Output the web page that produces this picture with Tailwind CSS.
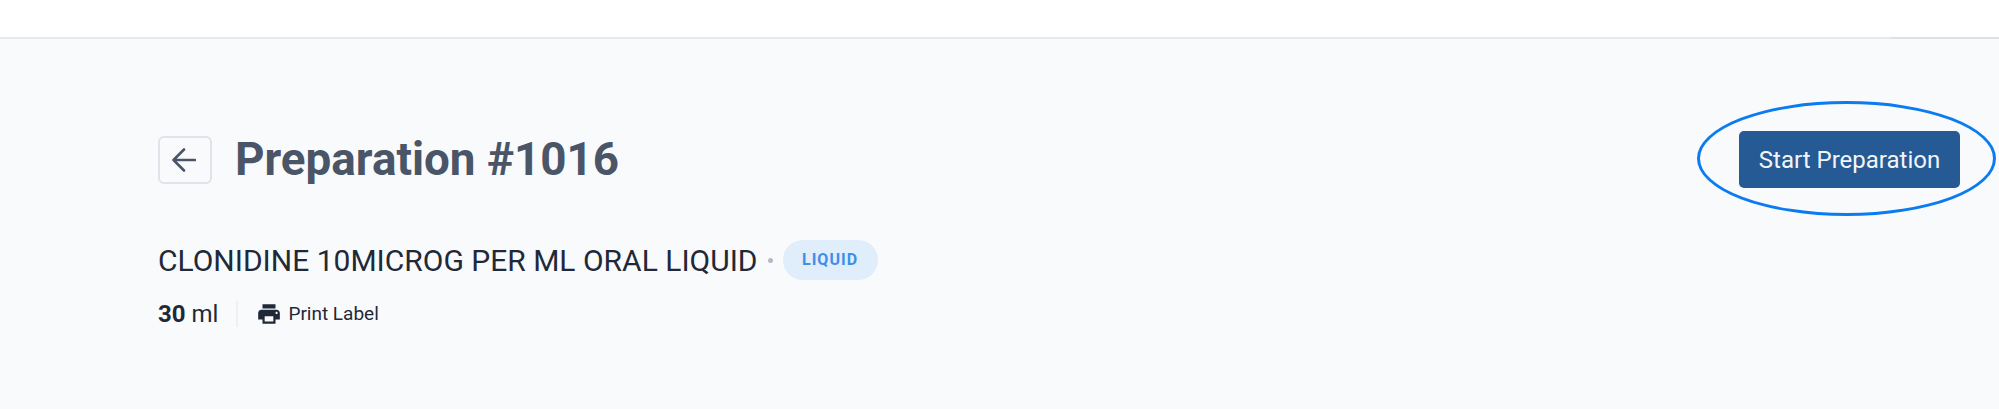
<!DOCTYPE html>
<html lang="en">
<head>
    <meta charset="UTF-8">
    <title>Preparation #1016</title>
    <script src="https://cdn.jsdelivr.net/npm/@tailwindcss/browser@4"></script>
</head>
<body class="h-[409px] overflow-hidden bg-[#f9fafc] font-['Roboto',sans-serif]">
    <!-- Top bar -->
    <header class="relative h-[39px] bg-white border-b-2 border-[#e6e8ea]">
        <div class="absolute right-0 top-full h-[2px] w-[108px] bg-[#dde1e3]"></div>
    </header>

    <main class="pl-[158px] pr-[39px] pt-[92px]">
        <!-- Title row -->
        <div class="flex items-center justify-between">
            <div class="flex items-center gap-[23px]">
                <button class="flex h-[48px] w-[54px] items-center justify-center rounded-[6px] border-2 border-[#dfe3ea]">
                    <svg class="-ml-[3px] h-[24px] w-[24px]" viewBox="0 0 24 24" fill="none" stroke="#4a5568" stroke-width="2.6" stroke-linecap="round" stroke-linejoin="round">
                        <path d="M23 12H1.5M12 1.5 1.5 12 12 22.5"/>
                    </svg>
                </button>
                <h1 class="text-[45.8px] font-bold leading-none text-[#4a5568]">Preparation #1016</h1>
            </div>
            <div class="relative">
                <div class="absolute -left-[42px] -right-[36px] -top-[30px] -bottom-[28px] rounded-[50%] border-[3.5px] border-[#0a7cf0]"></div>
                <button class="relative flex h-[57px] w-[221px] items-center justify-center rounded-[5px] bg-[#255a94] text-[24px] text-[#f2f5f9]">Start Preparation</button>
            </div>
        </div>

        <!-- Product -->
        <div class="mt-[52px] flex h-[40px] items-center">
            <span class="text-[30px] text-[#1f2937]">CLONIDINE 10MICROG PER ML ORAL LIQUID</span>
            <span class="ml-[10px] h-[5px] w-[5px] rounded-full bg-[#b4bac3]"></span>
            <span class="ml-[10px] flex h-[40px] w-[95px] items-center justify-center rounded-[20px] bg-[#e0eefb] text-[16px] font-bold tracking-[1px] text-[#3d8fe8]">LIQUID</span>
        </div>

        <!-- Volume and label -->
        <div class="mt-[19px] flex h-[30px] items-center">
            <span class="text-[24px] text-[#1f2937]"><span class="font-bold">30</span> ml</span>
            <span class="ml-[18px] h-[26px] w-[2px] bg-[#eef0f3]"></span>
            <span class="ml-[18px] flex items-center gap-[6px] text-[19px] text-[#1f2937]">
                <svg class="h-[26px] w-[26px]" viewBox="0 0 24 24" fill="#1f2937">
                    <path d="M19 8H5c-1.66 0-3 1.34-3 3v6h4v4h12v-4h4v-6c0-1.66-1.34-3-3-3zm-3 11H8v-5h8v5zm3-7c-.55 0-1-.45-1-1s.45-1 1-1 1 .45 1 1-.45 1-1 1zm-1-9H6v4h12V3z"/>
                </svg>
                Print Label
            </span>
        </div>
    </main>
</body>
</html>
